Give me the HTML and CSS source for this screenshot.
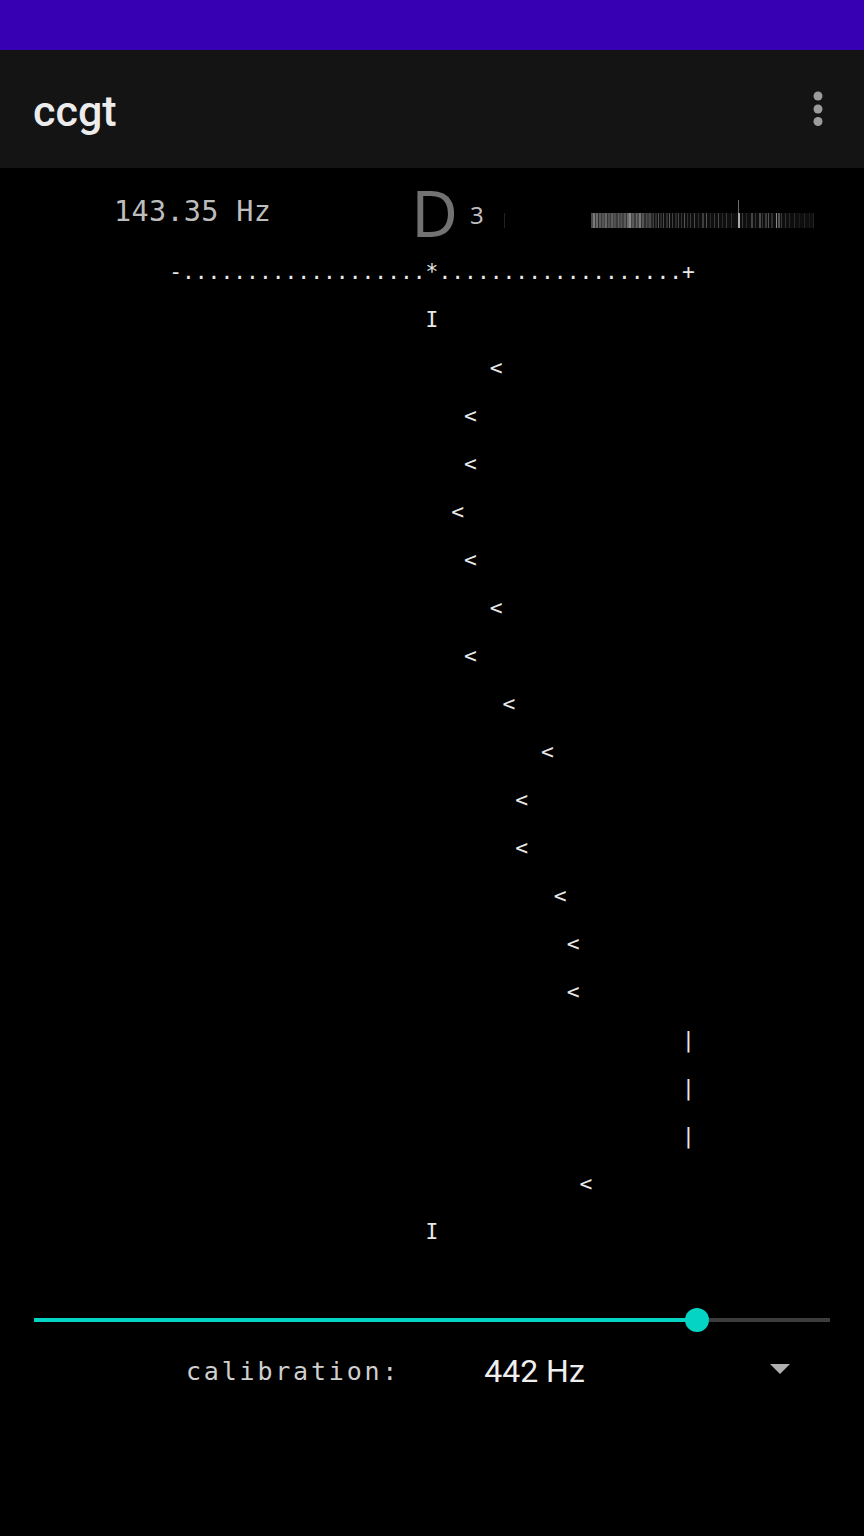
FILE: index.html
```html
<!DOCTYPE html>
<html>
<head>
<meta charset="utf-8">
<link rel="stylesheet" href="styles.css">
</head>
<body>
<div class="status"></div>
<div class="appbar">
  <div class="title">ccgt</div>
  <svg class="overflow" width="12" height="36" viewBox="0 0 12 36">
    <circle cx="6" cy="5" r="4.5" fill="#9c9c9c"/>
    <circle cx="6" cy="18" r="4.5" fill="#9c9c9c"/>
    <circle cx="6" cy="30.5" r="4.5" fill="#9c9c9c"/>
  </svg>
</div>
<div class="main">
  <div class="header">
    <div class="freq">143.35 Hz</div>
    <div class="note">D</div>
    <div class="octave">3</div>
    <svg class="spectrum" width="311" height="28" viewBox="0 0 311 28">
      <rect x="0" y="13" width="1" height="15" fill="#222"/>
      <rect x="87" y="13" width="223" height="15" fill="#0e0e0e"/>
      <rect x="87" y="13" width="2" height="15" fill="#4a4a4a"/>
      <rect x="89" y="13" width="2" height="15" fill="#7a7a7a"/>
      <rect x="91" y="13" width="1" height="15" fill="#3a3a3a"/>
      <rect x="92" y="13" width="2" height="15" fill="#6a6a6a"/>
      <rect x="94" y="13" width="1" height="15" fill="#2a2a2a"/>
      <rect x="95" y="13" width="2" height="15" fill="#5a5a5a"/>
      <rect x="97" y="13" width="1" height="15" fill="#3a3a3a"/>
      <rect x="98" y="13" width="2" height="15" fill="#555"/>
      <rect x="100" y="13" width="1" height="15" fill="#444"/>
      <rect x="101" y="13" width="2" height="15" fill="#666"/>
      <rect x="103" y="13" width="1" height="15" fill="#333"/>
      <rect x="104" y="13" width="2" height="15" fill="#505050"/>
      <rect x="106" y="13" width="1" height="15" fill="#3d3d3d"/>
      <rect x="107" y="13" width="2" height="15" fill="#5d5d5d"/>
      <rect x="109" y="13" width="1" height="15" fill="#444"/>
      <rect x="110" y="13" width="2" height="15" fill="#4f4f4f"/>
      <rect x="112" y="13" width="2" height="15" fill="#3a3a3a"/>
      <rect x="114" y="13" width="1" height="15" fill="#606060"/>
      <rect x="115" y="13" width="2" height="15" fill="#454545"/>
      <rect x="117" y="13" width="1" height="15" fill="#555"/>
      <rect x="118" y="13" width="2" height="15" fill="#404040"/>
      <rect x="120" y="13" width="2" height="15" fill="#5a5a5a"/>
      <rect x="122" y="13" width="1" height="15" fill="#333"/>
      <rect x="123" y="13" width="2" height="15" fill="#6a6a6a"/>
      <rect x="125" y="13" width="2" height="15" fill="#888"/>
      <rect x="127" y="13" width="1" height="15" fill="#444"/>
      <rect x="128" y="13" width="2" height="15" fill="#5a5a5a"/>
      <rect x="130" y="13" width="2" height="15" fill="#3c3c3c"/>
      <rect x="132" y="13" width="1" height="15" fill="#666"/>
      <rect x="133" y="13" width="2" height="15" fill="#4a4a4a"/>
      <rect x="135" y="13" width="2" height="15" fill="#777"/>
      <rect x="137" y="13" width="1" height="15" fill="#333"/>
      <rect x="138" y="13" width="2" height="15" fill="#555"/>
      <rect x="140" y="13" width="2" height="15" fill="#2e2e2e"/>
      <rect x="142" y="13" width="1" height="15" fill="#4d4d4d"/>
      <rect x="143" y="13" width="2" height="15" fill="#393939"/>
      <rect x="145" y="13" width="2" height="15" fill="#4a4a4a"/>
      <rect x="147" y="13" width="2" height="15" fill="#282828"/>
      <rect x="149" y="13" width="1" height="15" fill="#3f3f3f"/>
      <rect x="151" y="13" width="2" height="15" fill="#303030"/>
      <rect x="154" y="13" width="1" height="15" fill="#555"/>
      <rect x="156" y="13" width="2" height="15" fill="#2a2a2a"/>
      <rect x="159" y="13" width="1" height="15" fill="#4a4a4a"/>
      <rect x="162" y="13" width="2" height="15" fill="#303030"/>
      <rect x="165" y="13" width="1" height="15" fill="#5a5a5a"/>
      <rect x="168" y="13" width="1" height="15" fill="#404040"/>
      <rect x="171" y="13" width="2" height="15" fill="#2a2a2a"/>
      <rect x="174" y="13" width="1" height="15" fill="#484848"/>
      <rect x="177" y="13" width="1" height="15" fill="#353535"/>
      <rect x="180" y="13" width="1" height="15" fill="#555"/>
      <rect x="183" y="13" width="1" height="15" fill="#2f2f2f"/>
      <rect x="186" y="13" width="1" height="15" fill="#3a3a3a"/>
      <rect x="190" y="13" width="1" height="15" fill="#4a4a4a"/>
      <rect x="194" y="13" width="1" height="15" fill="#303030"/>
      <rect x="198" y="13" width="2" height="15" fill="#3e3e3e"/>
      <rect x="202" y="13" width="1" height="15" fill="#555"/>
      <rect x="206" y="13" width="1" height="15" fill="#2c2c2c"/>
      <rect x="210" y="13" width="1" height="15" fill="#3a3a3a"/>
      <rect x="214" y="13" width="1" height="15" fill="#4a4a4a"/>
      <rect x="218" y="13" width="1" height="15" fill="#2a2a2a"/>
      <rect x="222" y="13" width="1" height="15" fill="#3a3a3a"/>
      <rect x="227" y="13" width="1" height="15" fill="#2c2c2c"/>
      <rect x="234" y="0" width="1" height="28" fill="#6a6a6a"/>
      <rect x="234" y="13" width="2" height="15" fill="#aaa"/>
      <rect x="238" y="13" width="1" height="15" fill="#3a3a3a"/>
      <rect x="242" y="13" width="1" height="15" fill="#2a2a2a"/>
      <rect x="247" y="13" width="2" height="15" fill="#444"/>
      <rect x="251" y="13" width="1" height="15" fill="#333"/>
      <rect x="255" y="13" width="2" height="15" fill="#4a4a4a"/>
      <rect x="258" y="13" width="1" height="15" fill="#333"/>
      <rect x="261" y="13" width="2" height="15" fill="#3a3a3a"/>
      <rect x="264" y="13" width="1" height="15" fill="#555"/>
      <rect x="267" y="13" width="2" height="15" fill="#2e2e2e"/>
      <rect x="272" y="13" width="1" height="15" fill="#888"/>
      <rect x="274" y="13" width="2" height="15" fill="#555"/>
      <rect x="277" y="13" width="1" height="15" fill="#3a3a3a"/>
      <rect x="281" y="13" width="1" height="15" fill="#333"/>
      <rect x="285" y="13" width="1" height="15" fill="#2a2a2a"/>
      <rect x="290" y="13" width="1" height="15" fill="#2c2c2c"/>
      <rect x="295" y="13" width="1" height="15" fill="#1e1e1e"/>
      <rect x="300" y="13" width="1" height="15" fill="#262626"/>
      <rect x="305" y="13" width="1" height="15" fill="#1a1a1a"/>
      <rect x="309" y="13" width="1" height="15" fill="#222"/>
    </svg>
  </div>
<pre class="trace">-...................*...................+
                    I                    
                         <               
                       <                 
                       <                 
                      <                  
                       <                 
                         <               
                       <                 
                          <              
                             <           
                           <             
                           <             
                              <          
                               <         
                               <         
                                        |
                                        |
                                        |
                                <        
                    I                    </pre>
  <div class="slider">
    <div class="track">
      <div class="active" style="width:83.3%"></div>
      <div class="thumb"></div>
      <div class="inactive"></div>
    </div>
  </div>
  <div class="calib">
    <div class="calib-label">calibration:</div>
    <div class="calib-value">442 Hz</div>
    <svg class="dropdown" width="20" height="10" viewBox="0 0 20 10">
      <path d="M0 0 H20 L10 10 Z" fill="#b0b0b0"/>
    </svg>
  </div>
</div>
</body>
</html>
```

FILE: styles.css
```css
html, body {
  margin: 0;
  padding: 0;
  background: #000;
}
body {
  width: 864px;
  height: 1536px;
  overflow: hidden;
  font-family: "DejaVu Sans Mono", monospace;
}
.status {
  height: 50px;
  background: #3700b3;
}
.appbar {
  height: 118px;
  background: #141414;
  display: flex;
  align-items: flex-start;
  justify-content: space-between;
  box-sizing: border-box;
  padding: 0 40px 0 33px;
}
.title {
  font-family: Roboto, "Liberation Sans", sans-serif;
  font-weight: 500;
  font-size: 43px;
  line-height: 43px;
  color: #ececec;
  margin-top: 40px;
}
.overflow {
  margin-top: 41px;
}
.main {
  display: flex;
  flex-direction: column;
}
.header {
  height: 80px;
  display: flex;
  align-items: flex-start;
  padding-left: 114px;
}
.freq {
  font-family: "DejaVu Sans Mono", monospace;
  font-size: 28.5px;
  line-height: 28px;
  letter-spacing: 0.3px;
  color: #bdbdbd;
  margin-top: 30px;
  white-space: pre;
}
.note {
  font-family: "Noto Sans", "Open Sans", sans-serif;
  font-size: 64px;
  line-height: 64px;
  color: #727272;
  margin-top: 13px;
  margin-left: 140px;
}
.octave {
  font-family: "Noto Sans", "Open Sans", sans-serif;
  font-size: 24px;
  line-height: 24px;
  color: #bdbdbd;
  margin-top: 35px;
  margin-left: 12px;
}
.spectrum {
  margin-top: 32px;
  margin-left: 20px;
  flex: none;
}
.trace {
  margin: 0 auto;
  font-family: "DejaVu Sans Mono", monospace;
  font-size: 21.3px;
  line-height: 48px;
  width: 41ch;
  color: #e8e8e8;
  white-space: pre;
}
.slider {
  margin-top: 52px;
  height: 24px;
  padding: 0 34px;
}
.track {
  position: relative;
  height: 24px;
  display: flex;
  align-items: center;
}
.active {
  height: 4px;
  background: #03d4c3;
}
.inactive {
  flex: 1;
  height: 4px;
  background: #3c3c3c;
}
.thumb {
  width: 24px;
  height: 24px;
  border-radius: 50%;
  background: #03d4c3;
  margin: 0 -12px;
  position: relative;
  z-index: 1;
}
.calib {
  display: flex;
  align-items: flex-start;
  padding-left: 186px;
  height: 80px;
}
.calib-label {
  font-family: "DejaVu Sans Mono", monospace;
  font-size: 25px;
  line-height: 25px;
  letter-spacing: 2.8px;
  color: #cfcfcf;
  margin-top: 27px;
}
.calib-value {
  font-family: Roboto, "Liberation Sans", sans-serif;
  font-size: 32px;
  line-height: 32px;
  color: #efefef;
  margin-top: 23px;
  margin-left: 84px;
}
.dropdown {
  margin-top: 32px;
  margin-left: auto;
  margin-right: 74px;
}
```
